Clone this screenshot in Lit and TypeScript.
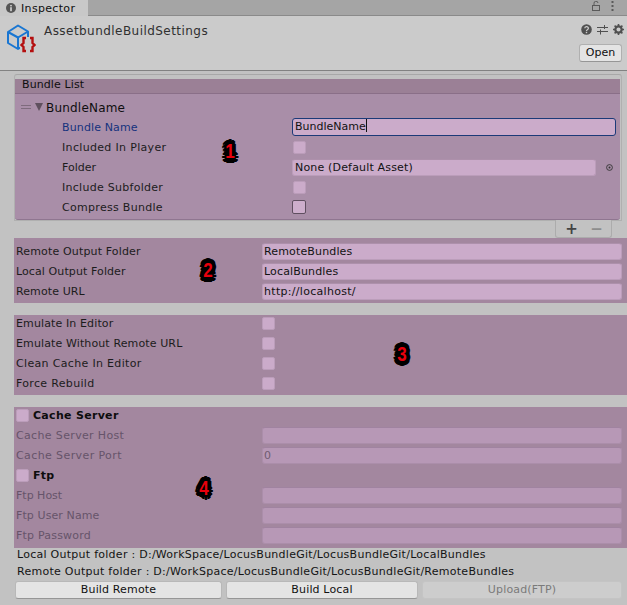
import { LitElement, html, css } from "lit";
import { customElement } from "lit/decorators.js";

// Measured tracking per label (the reference font has hinted, integer advances).
const TRACK: Record<string, number> = {
  "Bundle Name": 0.13, "Included In Player": 0.33, "Folder": 0, "Include Subfolder": 0.28, "Compress Bundle": 0.3,
  "Remote Output Folder": 0.15, "Local Output Folder": 0.1, "Remote URL": 0.1,
  "Emulate In Editor": 0.12, "Emulate Without Remote URL": 0.12, "Clean Cache In Editor": 0.33, "Force Rebuild": 0.33,
  "Cache Server Host": 0.35, "Cache Server Port": 0.4, "Ftp Host": 0, "Ftp User Name": 0.1, "Ftp Password": 0.2,
  "http://localhost/": 0.3,
};
const ls = (s: string) => `letter-spacing:${TRACK[s] ?? 0.15}px`;

const row = (label: string, value: string, dim = false) => html`
  <div class="row ${dim ? "dim" : ""}"><span class="lbl" style=${ls(label)}>${label}</span><div class="field" style=${ls(value)}>${value}</div></div>`;
const chk = (label: string) => html`
  <div class="row"><span class="lbl" style=${ls(label)}>${label}</span><div class="cb"></div></div>`;
const sub = (label: string, content: unknown, cls = "") => html`
  <div class="lrow"><span class="llbl ${cls}" style=${ls(label)}>${label}</span>${content}</div>`;

@customElement("app-root")
export class AppRoot extends LitElement {
  static styles = css`
    :host { display: block; width: 627px; height: 605px; position: relative; overflow: hidden; background: #c2c2c2;
      font: 11px/14px "DejaVu Sans", sans-serif; color: #0f0f0f; }
    .tabs { height: 15px; background: #a5a5a5; border-bottom: 1px solid #8a8a8a; display: flex; justify-content: space-between; }
    .tab { width: 88px; height: 16px; background: #c8c8c8; display: flex; align-items: center; gap: 5px; padding-left: 6px; box-sizing: border-box; letter-spacing: .33px; }
    .tab span { margin-top: 2px; }
    .tabicons { display: flex; align-items: center; gap: 11px; padding-right: 13px; height: 12px; }
    .head { height: 54px; background: #cbcbcb; border-bottom: 1px solid #828282; display: flex; }
    .logo { margin: 8px 0 0 6px; width: 30px; height: 30px; flex: none; }
    .title { margin: 8px 0 0 8px; font-size: 12px; color: #303030; letter-spacing: .45px; }
    .hright { margin-left: auto; display: flex; flex-direction: column; align-items: flex-end; padding: 8px 5px 0 0; gap: 9px; }
    .hicons { display: flex; gap: 5px; align-items: center; height: 11px; margin-right: -2px; }
    .open { width: 43px; height: 18px; box-sizing: border-box; background: #e4e4e4; border: 1px solid #b0b0b0; border-bottom-color: #969696; border-radius: 3px; text-align: center; line-height: 16px; }
    .body { padding: 3px 0 0 14px; position: relative; }
    .list { width: 608px; box-sizing: border-box; border: 1px solid #b0b0b0; border-top-color: #a8a8a8; border-radius: 3px 3px 0 0; padding: 4px 1px 0 0; height: 147px; }
    .list-in { background: #a98ea8; height: 141px; border-bottom: 1px solid #8f7690; box-sizing: border-box; border-radius: 0 0 3px 3px; }
    .lhead { height: 14px; background: #9b8096; border-bottom: 1px solid #8a6f88; padding-left: 7px; line-height: 12px; letter-spacing: .1px; }
    .lname { display: flex; align-items: center; height: 20px; padding-left: 6px; margin-top: 3px; font-size: 12px; letter-spacing: .2px; }
    .grip { width: 10px; height: 2px; border-top: 1px solid #7f6b7d; border-bottom: 1px solid #7f6b7d; margin-right: 4px; }
    .tri { width: 0; height: 0; border-left: 4.5px solid transparent; border-right: 4.5px solid transparent; border-top: 8px solid #5f505e; margin-right: 3px; }
    .lname b { font-weight: normal; margin-top: 2px; }
    .lrow { display: flex; align-items: center; height: 20px; padding-left: 47px; }
    .llbl { width: 230px; flex: none; color: #1c1c1c; margin-top: 2px; }
    .llbl.act { color: #15327e; }
    .lrow .field { width: 322px; }
    .field { height: 17px; box-sizing: border-box; background: #cbabca; border: 1px solid #bb9dba; border-top-color: #ad90ab; border-radius: 3px; padding-left: 2px; line-height: 15px; color: #121212; flex: none; white-space: nowrap; }
    .lrow .field.focus { height: 18px; width: 324px; border-color: #1c3a78; }
    .caret { display: inline-block; width: 1px; height: 13px; background: #111; vertical-align: -2px; }
    .lrow .field.obj { width: 304px; letter-spacing: .17px; }
    .picker { margin-left: 10px; width: 7px; height: 7px; display: block; }
    .cb { width: 13px; height: 13px; box-sizing: border-box; background: #cbabca; border: 1px solid #bb9dba; border-radius: 2px; flex: none; }
    .lrow .cb { margin-left: 1px; }
    .lrow .cb.dark { width: 14px; height: 14px; margin-left: 0; border-color: #5f4f60; background: #cdaecc; }
    .plus { position: absolute; left: 555px; top: 149px; width: 57px; height: 18px; box-sizing: border-box; background: #c2c2c2; border: 1px solid #acacac; border-top: none; border-radius: 0 0 3px 3px; display: flex; align-items: center; padding-left: 3px; font-size: 15px; line-height: 14px; font-weight: bold; }
    .plus span { width: 25px; text-align: center; }
    .plus .m { color: #8d8d8d; }
    .plus .p { color: #444; }
    .sec { width: 613px; background: #a3879f; box-sizing: border-box; padding-left: 2px; display: flex; flex-direction: column; gap: 3px; }
    .s2 { margin-top: 17px; height: 65px; padding-top: 5px; }
    .s3 { margin-top: 12px; height: 80px; }
    .s4 { margin-top: 12px; height: 141px; }
    .row { display: flex; align-items: center; height: 17px; flex: none; }
    .lbl { width: 246px; flex: none; color: #1c1c1c; }
    .row .field { width: 360px; padding-left: 1px; }
    .dim .lbl { color: #66546a; }
    .dim .field { background: #b798b6; border-color: #ab8eaa; border-top-color: #a083a0; color: #6f5c70; }
    .cbrow { display: flex; align-items: center; height: 17px; flex: none; gap: 4px; font-weight: bold; color: #0d0d0d; letter-spacing: .3px; }
    .info { height: 17px; padding-left: 17px; color: #141414; white-space: nowrap; letter-spacing: .265px; }
    .btns { display: flex; gap: 4px; padding-left: 15px; margin-top: -1px; }
    .btn { height: 18px; box-sizing: border-box; background: #e4e4e4; border: 1px solid #b8b8b8; border-bottom-color: #969696; border-radius: 3px; text-align: center; line-height: 15px; color: #111; flex: none; letter-spacing: .15px; }
    .b-remote { width: 207px; }
    .b-local { width: 192px; }
    .b-up { width: 200px; background: #cdcdcd; border-color: #c4c4c4; color: #7a7a7a; }
    .badge { position: absolute; width: 20px; height: 20px; text-align: center; font: bold 20px/20px "Liberation Sans", sans-serif; color: #e8000c; transform: scaleX(.85);
      text-shadow: 5px 0 0 #000, -5px 0 0 #000, 0 5px 0 #000, 0 -5px 0 #000, 4px 3px 0 #000, -4px 3px 0 #000, 4px -3px 0 #000, -4px -3px 0 #000, 3px 4px 0 #000, -3px 4px 0 #000, 3px -4px 0 #000, -3px -4px 0 #000, 2px 2px 0 #000, -2px 2px 0 #000, 2px -2px 0 #000, -2px -2px 0 #000, 3px 0 0 #000, -3px 0 0 #000, 0 3px 0 #000, 0 -3px 0 #000; }
    .b1 { left: 220px; top: 141px; }
    .b2 { left: 198px; top: 260px; }
    .b3 { left: 392px; top: 344px; }
    .b4 { left: 194px; top: 478px; }
  `;

  render() {
    return html`
      <div class="tabs">
        <div class="tab">
          <svg width="10" height="10" viewBox="0 0 10 10"><circle cx="5" cy="5" r="5" fill="#555"/><rect x="4.100" y="4.200" width="1.800" height="4" fill="#c8c8c8"/><rect x="4.100" y="1.900" width="1.800" height="1.500" fill="#c8c8c8"/></svg>
          <span>Inspector</span>
        </div>
        <div class="tabicons">
          <svg width="8" height="10" viewBox="0 0 8 10" fill="none" stroke="#5a5a5a"><rect x="0.500" y="4.500" width="7" height="5"/><path d="M2 4V2.500a2 2 0 0 1 4 -.5"/></svg>
          <svg width="3" height="10" viewBox="0 0 3 10" fill="#5a5a5a"><rect x="0.500" y="0" width="2" height="2"/><rect x="0.500" y="4" width="2" height="2"/><rect x="0.500" y="8" width="2" height="2"/></svg>
        </div>
      </div>
      <div class="head">
        <svg class="logo" viewBox="0 0 30 30" fill="none">
          <path d="M2 8L12 1.500L22 7.500V19L12 25L2 19Z M2 8L12 13.500L22 7.500 M12 13.500V25" stroke="#1976d2" stroke-width="2" stroke-linejoin="round"/>
          <rect x="14" y="13" width="16" height="16" fill="#cbcbcb"/>
          <path d="M20 14h-2.500v5l-2 2l2 2v4h2.500 M24 14h2.500v5l2 2l-2 2v4h-2.500" stroke="#b40f0f" stroke-width="2.400"/>
        </svg>
        <div class="title">AssetbundleBuildSettings</div>
        <div class="hright">
          <div class="hicons">
            <svg width="11" height="11" viewBox="0 0 11 11"><circle cx="5.500" cy="5.500" r="5.300" fill="#505050"/><path d="M3.800 4.200a1.800 1.600 0 1 1 2.600 1.500q-.9.5-.9 1.200" fill="none" stroke="#cbcbcb" stroke-width="1.300"/><rect x="4.800" y="7.800" width="1.400" height="1.400" fill="#cbcbcb"/></svg>
            <svg width="11" height="11" viewBox="0 0 11 11" stroke="#505050" fill="none"><path d="M0 3.500h11 M0 7.500h11 M7.500 1v4 M3.500 5.500v5"/></svg>
            <svg width="11" height="11" viewBox="0 0 11 11"><circle cx="5.500" cy="5.500" r="3.200" fill="none" stroke="#505050" stroke-width="2.200"/><path d="M5.500 0v11 M0 5.500h11 M1.600 1.600l7.800 7.800 M9.400 1.600l-7.800 7.800" stroke="#505050" stroke-width="1.600"/><circle cx="5.500" cy="5.500" r="2" fill="#cbcbcb"/></svg>
          </div>
          <div class="open">Open</div>
        </div>
      </div>
      <div class="body">
        <div class="list">
          <div class="list-in">
            <div class="lhead">Bundle List</div>
            <div class="lname"><span class="grip"></span><span class="tri"></span><b>BundleName</b></div>
            ${sub("Bundle Name", html`<div class="field focus">BundleName<span class="caret"></span></div>`, "act")}
            ${sub("Included In Player", html`<div class="cb"></div>`)}
            ${sub("Folder", html`<div class="field obj">None (Default Asset)</div>
              <svg class="picker" viewBox="0 0 7 7"><circle cx="3.500" cy="3.500" r="2.900" fill="none" stroke="#333" stroke-width="0.900"/><circle cx="3.500" cy="3.500" r="1" fill="#333"/></svg>`)}
            ${sub("Include Subfolder", html`<div class="cb"></div>`)}
            ${sub("Compress Bundle", html`<div class="cb dark"></div>`)}
          </div>
        </div>
        <div class="plus"><span class="p">+</span><span class="m">−</span></div>
        <div class="sec s2">
          ${row("Remote Output Folder", "RemoteBundles")}
          ${row("Local Output Folder", "LocalBundles")}
          ${row("Remote URL", "http://localhost/")}
        </div>
        <div class="sec s3">
          ${chk("Emulate In Editor")}
          ${chk("Emulate Without Remote URL")}
          ${chk("Clean Cache In Editor")}
          ${chk("Force Rebuild")}
        </div>
        <div class="sec s4">
          <div class="cbrow"><div class="cb"></div><span>Cache Server</span></div>
          ${row("Cache Server Host", "", true)}
          ${row("Cache Server Port", "0", true)}
          <div class="cbrow"><div class="cb"></div><span>Ftp</span></div>
          ${row("Ftp Host", "", true)}
          ${row("Ftp User Name", "", true)}
          ${row("Ftp Password", "", true)}
        </div>
      </div>
      <div class="info">Local Output folder : D:/WorkSpace/LocusBundleGit/LocusBundleGit/LocalBundles</div>
      <div class="info">Remote Output folder : D:/WorkSpace/LocusBundleGit/LocusBundleGit/RemoteBundles</div>
      <div class="btns">
        <div class="btn b-remote">Build Remote</div>
        <div class="btn b-local">Build Local</div>
        <div class="btn b-up">Upload(FTP)</div>
      </div>
      <span class="badge b1">1</span><span class="badge b2">2</span><span class="badge b3">3</span><span class="badge b4">4</span>
    `;
  }
}
